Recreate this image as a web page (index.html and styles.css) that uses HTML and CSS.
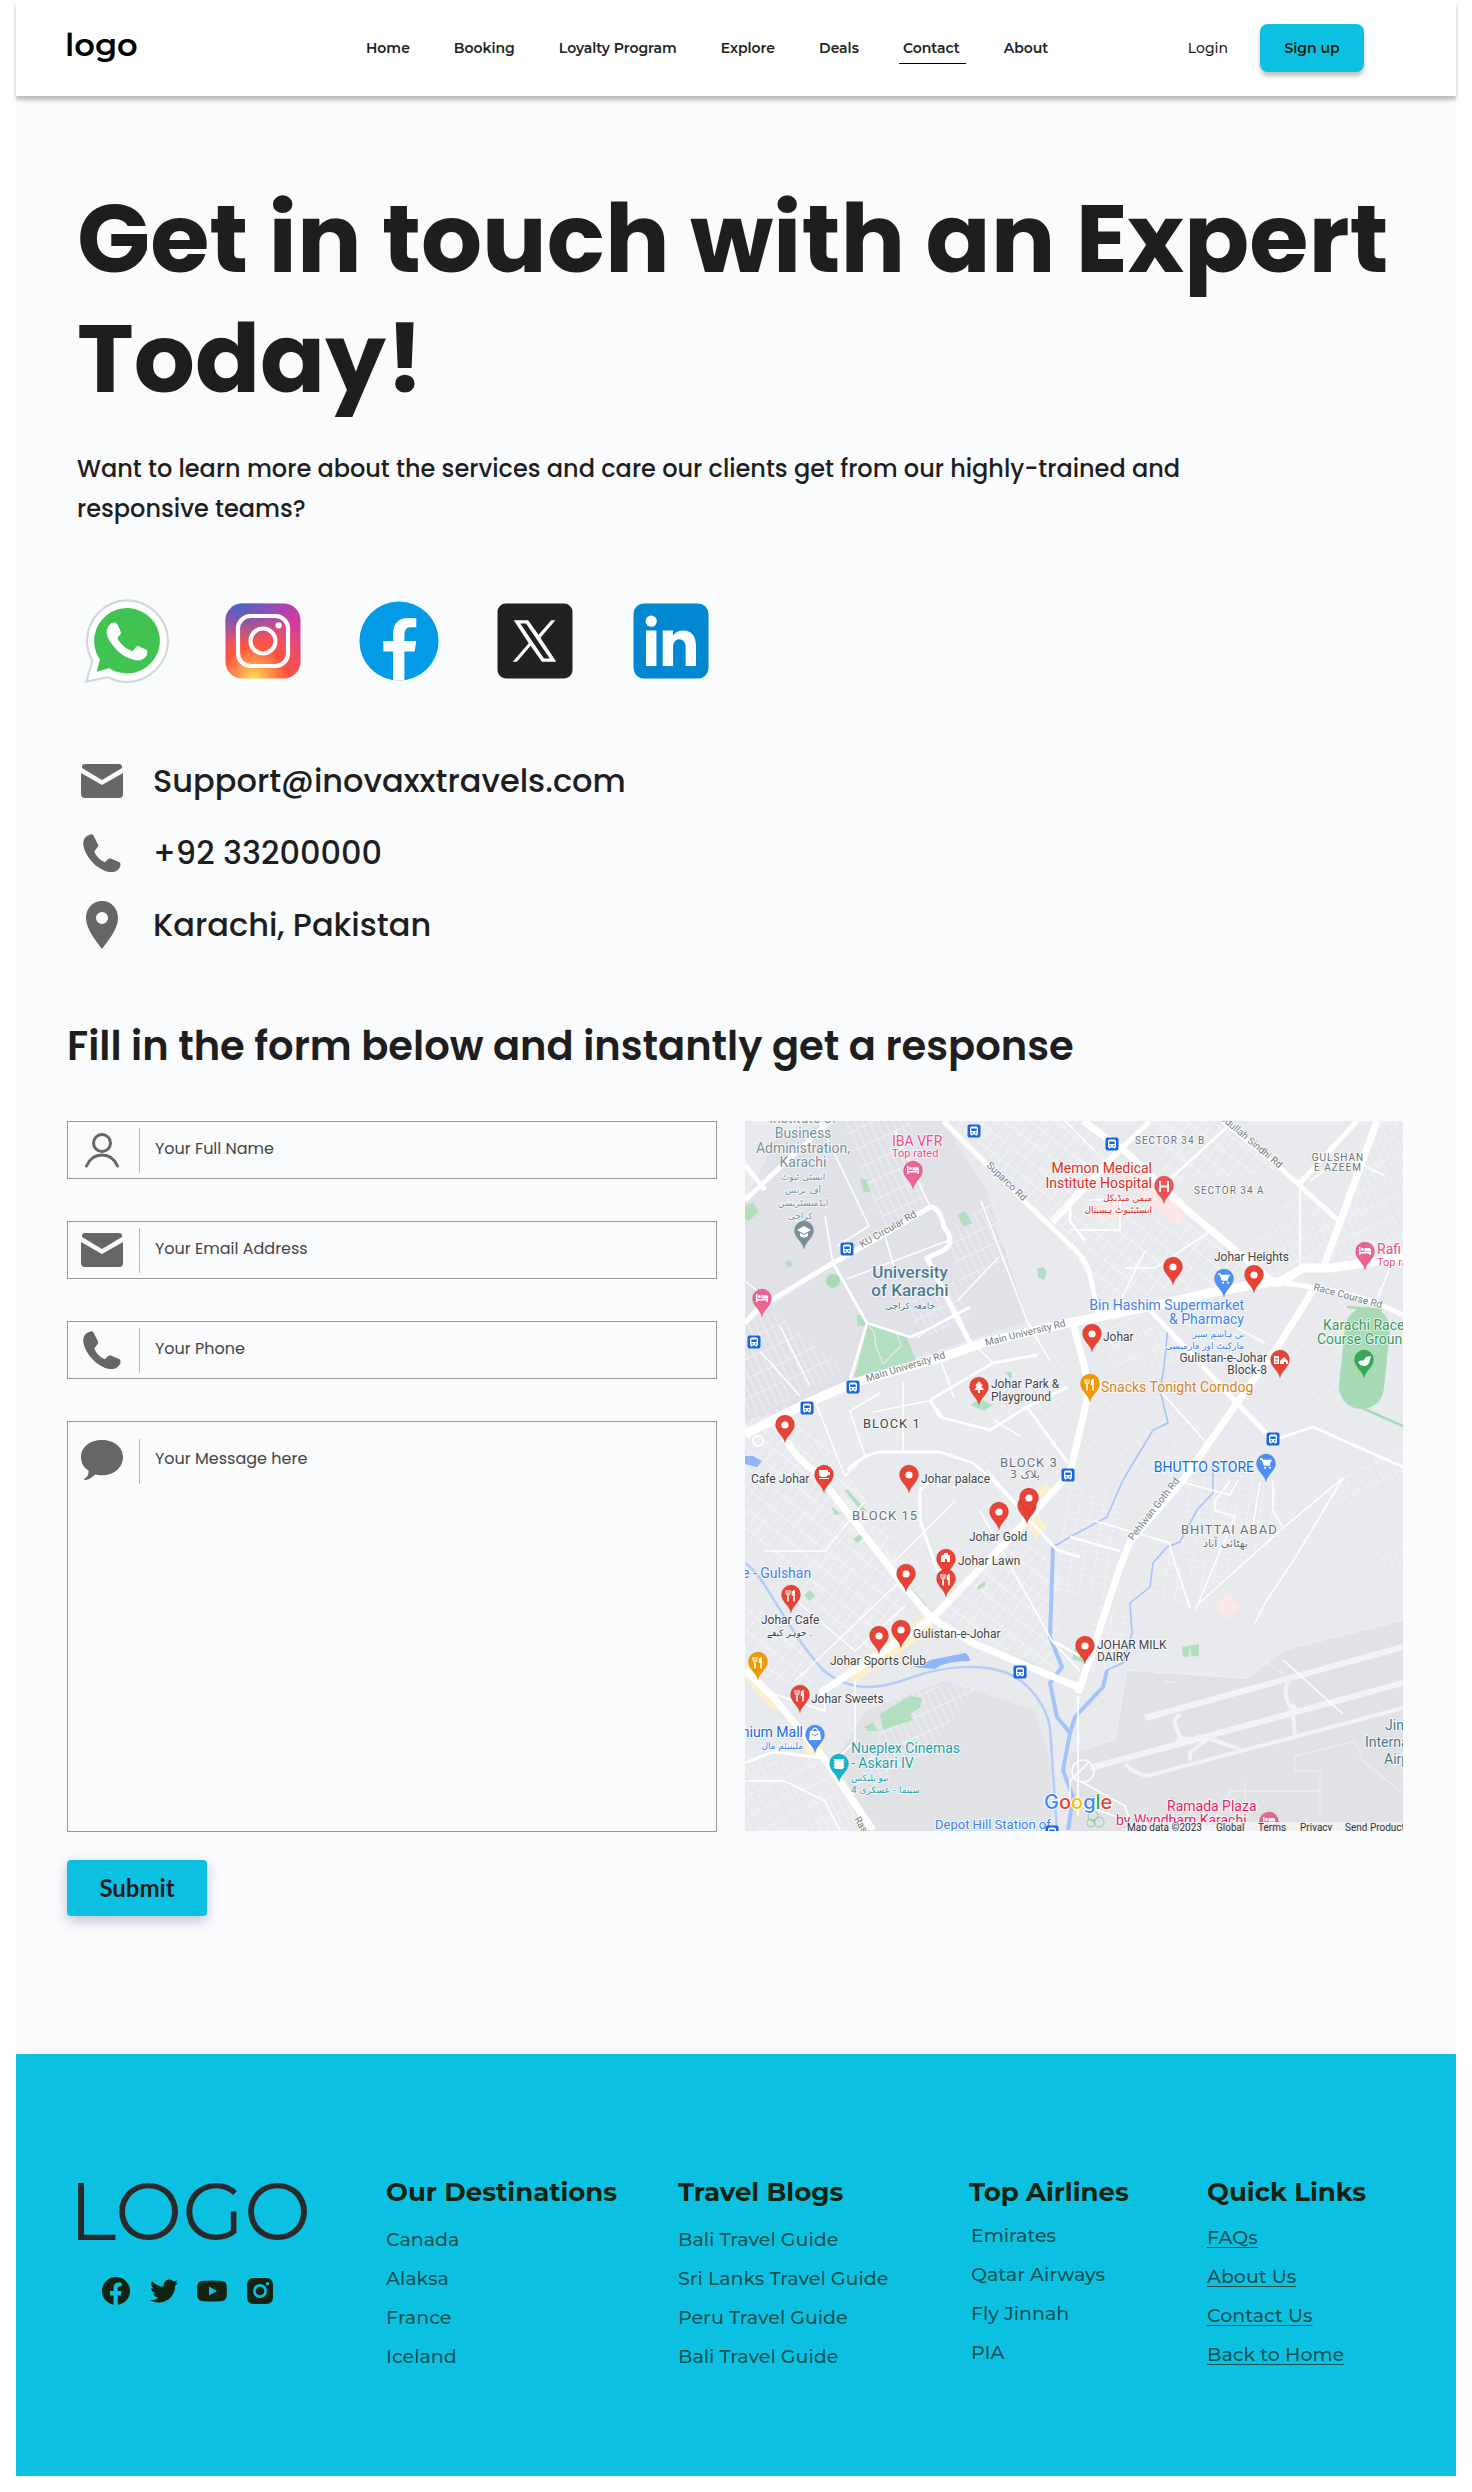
FILE: index.html
```html
<!DOCTYPE html>
<html lang="en">
<head>
<meta charset="utf-8">
<meta name="viewport" content="width=device-width, initial-scale=1">
<title>Contact</title>
<link rel="stylesheet" href="styles.css">
</head>
<body>
<svg class="sprite" aria-hidden="true">
  <symbol id="i-mail" viewBox="0 0 42 34"><path d="M4 0h34q3 0 3 3v1L21 16 1 4V3q0-3 3-3z"/><path d="M0 9l21 12L42 9v21q0 4-4 4H4q-4 0-4-4z"/></symbol>
  <symbol id="i-phone" viewBox="0 0 40 40"><path d="M7 1C3 2 0 6 1 12c2 12 16 27 29 27 5 0 8-3 9-7 0-1 0-2-1-3l-9-4c-1 0-2 0-3 1l-3 3c-5-2-9-6-11-11l3-4c1-1 1-2 1-3L11 1C10 0 9 0 7 1z"/></symbol>
</svg>
<div class="page">
  <header class="header">
    <a class="brand" href="#">logo</a>
    <nav class="nav">
      <a href="#">Home</a><a href="#">Booking</a><a href="#">Loyalty Program</a><a href="#">Explore</a><a href="#">Deals</a><a class="active" href="#">Contact</a><a href="#">About</a>
    </nav>
    <div class="actions"><a href="#">Login</a><button class="signup" type="button">Sign up</button></div>
  </header>

  <main class="main">
    <section class="hero">
      <h1>Get in touch with an Expert Today!</h1>
      <p class="lead">Want to learn more about the services and care our clients get from our highly-trained and responsive teams?</p>
      <div class="social">
        <a href="#" aria-label="WhatsApp"><svg viewBox="0 0 48 48"><path fill="#fff" stroke="#cfd8dc" d="M4.500 43.500l2.900-10A19.200 19.200 0 0 1 4.800 24C4.800 13.400 13.400 4.500 24 4.500S43.700 13.400 43.700 24 34.600 43.700 24 43.700c-3.200 0-6.300-.800-9.100-2.300z"/><path fill="#40c351" d="M35.200 12.800A15.800 15.800 0 0 0 10.600 32.300l.4.600-1.600 5.800 6-1.600.6.300A15.800 15.800 0 0 0 39.800 24c0-4.200-1.600-8.200-4.600-11.200z"/><path fill="#fff" fill-rule="evenodd" d="M19.300 16c-.4-.8-.7-.8-1.100-.8h-.9c-.3 0-.9.100-1.300.6s-1.700 1.600-1.700 4 1.700 4.700 2 5 3.300 5.300 8.200 7.200c4 1.600 4.900 1.300 5.700 1.200s2.800-1.100 3.200-2.300.4-2.100.3-2.300-.4-.3-.9-.6-2.800-1.400-3.200-1.500-.7-.2-1.100.2-1.200 1.500-1.500 1.900-.6.400-1 .100-2-.7-3.800-2.400c-1.400-1.300-2.400-2.800-2.600-3.300s0-.7.200-1 .5-.6.700-.8.300-.5.500-.8.100-.6 0-.8-1-2.600-1.700-3.600z"/></svg></a>
        <a href="#" aria-label="Instagram"><svg viewBox="0 0 48 48"><defs><radialGradient id="ig1" cx="19.400" cy="42" r="44.900" gradientUnits="userSpaceOnUse"><stop offset="0" stop-color="#fd5"/><stop offset=".15" stop-color="#ff9f4b"/><stop offset=".35" stop-color="#ff543f"/><stop offset=".5" stop-color="#ee4f62"/><stop offset=".75" stop-color="#d33aa4"/><stop offset="1" stop-color="#c837ab"/></radialGradient><radialGradient id="ig2" cx="11.800" cy="5.500" r="29.800" gradientTransform="matrix(1 0 0 .667 0 1.800)" gradientUnits="userSpaceOnUse"><stop offset="0" stop-color="#4168c9"/><stop offset="1" stop-color="#4168c9" stop-opacity="0"/></radialGradient></defs><rect x="6" y="6" width="36" height="36" rx="8" fill="url(#ig1)"/><rect x="6" y="6" width="36" height="36" rx="8" fill="url(#ig2)"/><g fill="none" stroke="#fff" stroke-width="2"><circle cx="24" cy="24" r="6"/><rect x="12" y="12" width="24" height="24" rx="6"/></g><circle cx="31.500" cy="16.500" r="1.500" fill="#fff"/></svg></a>
        <a href="#" aria-label="Facebook"><svg viewBox="0 0 48 48"><circle cx="24" cy="24" r="19" fill="#039be5"/><path fill="#fff" d="M26.600 29h4.900l.8-5h-5.700v-2.700c0-2.100.7-3.900 2.600-3.900h3.100V13.100c-.5-.1-1.700-.2-3.900-.2-4.600 0-7.200 2.400-7.200 7.900V24h-4.700v5h4.700v13.800c.9.100 1.900.2 2.800.2.900 0 1.700-.1 2.600-.2z"/></svg></a>
        <a href="#" aria-label="X"><svg viewBox="0 0 48 48"><rect x="6" y="6" width="36" height="36" rx="4" fill="#212121"/><path fill="#fff" fill-rule="evenodd" d="M13.800 14h6.900l5 7 6.100-7h2l-7.200 8.400L34.200 34h-6.900l-5.400-7.700L15.300 34h-2l7.700-8.900zm3.100 1.600 11.400 16.800h2.800L19.700 15.600z"/></svg></a>
        <a href="#" aria-label="LinkedIn"><svg viewBox="0 0 48 48"><rect x="6" y="6" width="36" height="36" rx="5" fill="#0288d1"/><circle cx="14.500" cy="14.500" r="2.700" fill="#fff"/><path fill="#fff" d="M12 19h5v17h-5zM36 36h-5v-9.100c0-2.200-1.200-3.700-3-3.700-1.400 0-2.300 1-2.700 1.900-.1.300-.3.900-.3 1.900v9h-5V19h5v2.600C25.700 20.500 27 19 29.900 19c3.600 0 6.100 2.300 6.100 7.400z"/></svg></a>
      </div>
      <address class="contacts">
        <p><svg width="42" height="34"><use href="#i-mail"/></svg><span>Support@inovaxxtravels.com</span></p>
        <p><svg width="42" height="39"><use href="#i-phone"/></svg><span>+92 33200000</span></p>
        <p><svg width="42" height="48" viewBox="-5 0 42 48"><path fill-rule="evenodd" d="M16 0C7 0 0 7 0 17c0 11 10 23 16 31 6-8 16-20 16-31C32 7 25 0 16 0zm0 11a6 6 0 1 1 0 12 6 6 0 0 1 0-12z"/></svg><span>Karachi, Pakistan</span></p>
      </address>
    </section>

    <h2>Fill in the form below and instantly get a response</h2>
    <div class="split">
      <form class="form">
        <label class="field"><svg class="outline" width="42" height="40" viewBox="0 0 42 40"><circle cx="21" cy="13" r="8.500"/><path d="M5.500 36c3-7 9-11 15.500-11s12.500 4 15.500 11"/></svg><input type="text" aria-label="Your Full Name" placeholder="Your Full Name"></label>
        <label class="field"><svg width="42" height="34"><use href="#i-mail"/></svg><input type="email" aria-label="Your Email Address" placeholder="Your Email Address"></label>
        <label class="field"><svg width="42" height="39"><use href="#i-phone"/></svg><input type="tel" aria-label="Your Phone" placeholder="Your Phone"></label>
        <label class="field message"><svg width="44" height="42" viewBox="0 0 44 42"><path d="M22 0c12 0 22 7 22 18S34 37 22 37c-3 0-5 0-7-1-3 3-7 6-11 6-1 0-1-1 0-2 3-1 4-4 4-8C3 29 0 24 0 18 0 7 10 0 22 0z"/></svg><textarea aria-label="Your Message here" placeholder="Your Message here"></textarea></label>
        <button class="submit" type="submit">Submit</button>
      </form>

      <svg class="map" viewBox="0 0 658 710" role="img" aria-label="Map of Karachi">
        <defs>
          <g id="pin"><path d="M0 0C-1-7-9.500-11-9.500-18.500a9.500 9.500 0 0 1 19 0C9.500-11 1-7 0 0z" stroke="#000" stroke-opacity=".2" stroke-width=".6"/></g>
          <g id="dot"><use href="#pin" fill="#ea4335"/><circle cy="-18" r="3.600" fill="#fff"/></g>
          <g id="fork" fill="none" stroke="#fff"><path stroke-width="1.600" d="M-3-17v5.500M3-23v11.500"/><path d="M-5-23v4q2 3 4 0v-4M-3-23v5"/><path stroke-width="2.500" d="M2-22v5"/></g>
          <g id="bed" fill="#fff"><path d="M-6-23h1.500v5H6v3H4.500v-1.500h-9V-15H-6z"/><circle cx="-2.600" cy="-20.500" r="1.400"/><path d="M-.5-22H4q2 0 2 2v1.500H-.5z"/></g>
          <g id="cart" fill="none" stroke="#fff" stroke-width="1.300"><path d="M-6-23h2l2.500 6h5.500"/><path fill="#fff" d="M-3-21.500h8l-2 3.500h-5z"/><path d="M-1-14.200h.1M4-14.200h.1" stroke-linecap="round" stroke-width="2"/></g>
          <g id="bus"><rect x="-6.500" y="-6.500" width="13" height="13" rx="2" fill="#1a66e0"/><path fill="#fff" d="M-4-2.500q0-2 2-2h4q2 0 2 2v5l-1 2H2l-1-1h-2l-1 1h-1l-1-2z"/><path fill="#1a66e0" d="M-2.700-2.500h5.400V0h-5.400zM-2.500 1.200h1.500v1.200h-1.500zM1 1.200h1.500v1.200H1z"/></g>
          <pattern id="h1" width="9" height="16" patternUnits="userSpaceOnUse" patternTransform="rotate(38)"><path d="M0 0V16M0 0H9" stroke="#f6f7f9" stroke-width="1.400"/></pattern>
          <pattern id="h2" width="7" height="18" patternUnits="userSpaceOnUse" patternTransform="rotate(-25)"><path d="M0 0V18M0 0H7" stroke="#f4f5f7" stroke-width="1.300"/></pattern>
          <pattern id="h3" width="12" height="6" patternUnits="userSpaceOnUse" patternTransform="rotate(8)"><path d="M0 0V6M0 0H12" stroke="#f5f6f8" stroke-width="1.200"/></pattern>
          <pattern id="h4" width="14" height="26" patternUnits="userSpaceOnUse" patternTransform="rotate(-38)"><path d="M0 0V26M0 0H14" stroke="#f3f4f6" stroke-width="1.200"/></pattern>
        </defs>
        <rect width="658" height="710" fill="#e8eaed"/>
        <path fill="#e0e2e7" d="M90 0H198L242 70 282 200 110 257 40 290 0 300V205L90 140 60 60zM30 20L85 0 120 30 92 140 0 200V80z"/>
        <path fill="#e0e2e6" d="M382 549L500 558 538 529 658 499V710H325V632L370 619z"/>
        <path fill="#e0e2e6" d="M200 560L290 590 305 640 308 710H130L90 640 120 590z"/>
        <!-- side streets -->
        <path fill="url(#h2)" d="M96 0h70l15 80-40 30zM200 110l50-30 15 55-50 30zM150 180l60-20 15 40-40 15z"/>
        <path fill="url(#h1)" d="M210 0H335L380 30 325 75 308 100zM410 0h70l60 50-120 12zM300 100l40-10 100 10 80 60-160 20z"/>
        <path fill="url(#h2)" d="M560 62l35 39-17 46-50 10-25-30zM636 0h22v130l-80 10zM355 190l40 0 60 50-90 10z"/>
        <path fill="url(#h4)" d="M425 200l90-30 15 60-38 45zM500 280l50-90 108 60v80l-90-30-40 13zM345 280l70-5 60 30-45 50-110 0z"/>
        <path fill="url(#h3)" d="M438 359l95-10 2 70-80 55-20-50zM325 360l55 10-20 110-55-10z"/>
        <path fill="url(#h4)" d="M190 280l60-35 70-30 3 140-75 0-50-25zM190 340l120 10-60 80-50 25zM90 360l80-20 20 110-50 0z"/>
        <path fill="url(#h1)" d="M0 300l40-15 60 60 80 130-60 60-120-120zM185 500l100-100 30 60v90zM0 470l60 60 10 40-70-20z"/>
        <path fill="url(#h2)" d="M0 200l30-10 70 60-60 30-40 15zM560 380l98-60v50l-70 20zM622 430l36-5v25h-30zM0 640l80 0 45 70H0zM150 575l90-20-60 80-70 30z"/>
        <path fill="url(#h3)" d="M348 480l40 20-15 50-30 0zM405 445l20-20 15 30 5 30-35-10z"/>
        <!-- hospital, markets -->
        <path fill="#fce8e6" d="M378 40l65 50-12 14-60-50zM340 82h35v14h-35zM469 486l13-14 14 14-14 13z"/>
        <path fill="#fdf0cf" d="M100 550l50-35 30-20 10 12-80 55zM0 540l45 52-20-5-25-30zM60 615h18v20h-18zM290 370l12-8 5 8-12 10zM280 400l12-8 10 15-12 10z"/>
        <!-- parks -->
        <g fill="#b3dfc0"><path d="M123 203l38 12 10 25-62 18zM0 84l8-2 6 8-10 10-4-3zM212 94l8-4 7 12-8 4zM112 194h9v11h-9zM40 141l5-2 3 5-5 3zM225 284l10-6 12 6-8 6zM260 251h7l-1 8zM115 58l6 0 5 14-8-2zM102 368l20 22-6 0-16-20zM86 385l10 8-6 1zM108 418l7-5 3 4-6 5zM59 474l6-5 5 6-6 5zM165 465l17 20-4 0-16-20zM262 533l28 10-2 5-26-12zM135 593l30-18 12 2-2 10-10 6 3 6-30 10zM120 606l8-5 4 9-10 0zM330 527l12-2 0 18-15-5zM232 466l8-6v5l-7 4zM437 526l17-3v12l-16 1z"/></g>
        <circle cx="88" cy="160" r="7" fill="#a8dab5"/><path fill="#b3dfc0" d="M292 148l6-2 4 5-3 8-6-3z"/>
        <g fill="none" stroke="#e8eaed" stroke-width="1.200"><path d="M124 205q8 8 6 18l8 20M138 243l18-18-5-15"/></g>
        <rect x="597" y="186" width="45" height="102" rx="22" fill="#a8dab5" transform="rotate(6 619 237)"/>
        <path fill="none" stroke="#a8dab5" stroke-width="2.500" d="M602 186l35 3M615 286l43 19"/>
        <g fill="none" stroke="#81c995" stroke-width=".8"><circle cx="348" cy="695" r="5"/><circle cx="354" cy="701" r="5"/><circle cx="346" cy="702" r="4"/></g>
        <!-- water -->
        <g fill="none" stroke="#a5c3fb" stroke-linejoin="round"><path stroke-width="1.600" d="M408 189l15 17-4 40-4 23 8 33-15 7-30 50-16 37-37 20-17 10M468 340v32l-16 17-17 32-13 5-14 16-3 24-20 16 2 30-9 30-16 7"/><path stroke-width="2.500" stroke="#b4ccf8" d="M0 442c20 12 40 65 78 107 30 25 60 18 90 7s70-14 94-4 40 35 43 55l7 103"/><path stroke-width="4" d="M362 549l-4 17-28 30-5 16-7 37 10 27-5 33M308 426l-3 90 12 30-12 16 7 34 13 16"/></g>
        <path fill="#8fb5fa" d="M168 546q10-2 17-7l35-7q5 3 5 8-25 0-35 8zM229 521l14 5v5l-14-6zM0 335l8 0 9 5-5 6-12-3z"/>
        <!-- airport -->
        <g fill="none" stroke="#f1f3f5" stroke-width="6"><path d="M400 597L658 526M345 647L658 562"/><path stroke-width="4" d="M380 643q10 10 22 12L658 587M436 594q-10 2-4 14 3 14 15 9M432 620q0-2 10 0M445 622q10-5 8-8M445 640v-8l20-16M465 618l30 10M547 555q-8 8-6 20t10 14l-4-6 3 30"/></g>
        <g fill="none" stroke="#eceef1" stroke-width="1.300"><path d="M325 632l45-13 12-70 120 8 36-28 120-30M402 540l30-32q20-10 45 2l63 44M410 540v12h60q20 0 35-10v-14M445 528v24M550 650v-15l60-15 8 20 40 32M550 650h25v20h-90l-22 40M485 670v20M575 670v30M500 660v50M420 560l10 2"/></g>
        <!-- minor roads -->
        <g fill="none" stroke="#fff" stroke-width="1.600" stroke-linejoin="round"><path d="M236 80L282 200 305 240M102 158l100-38M212 180l42-44M0 160l25 20M80 95l8 47M92 125l32-20-50-105M150 10l35 76M150 150L140 115M182 209l-10 8M35 205l30 60M70 280l30 75 20-20-15-45 30-18M15 230l40 45M128 291l60-12M158 331v-70M50 560l100-95 5-5M20 430h60l40-50M40 470l70 60 50-45M150 440l60-60M185 279l15 20M228 222l20 20M195 237l14 40M370 30L305 99M350 30l-30-30M345 79h30v30h-50M400 130l-30 60M380 147h30l60-40M555 62v80M565 60l35-25 40 20M492 207l28 15M415 270l45 50M430 359l55 15 8-15M350 400l75 22 0 5 20 60M485 360l-15 20v10l20 5-40 95M515 361l-8 50M528 359v30l10 18 60-50-48 80-30 45-10 20M538 407L450 486M538 539l60 54M250 300l25 15M312 429l-70-80M235 390l72 130 28 30M190 500l50 30M650 134l-20 50M0 660h40l40 20 20 40M20 570l60 20 0-12M110 560v60l-20 20M333 575v120M345 640l-20 20v20l60 20-5-15-45-25"/></g>
        <g fill="none" stroke="#fff" stroke-width="2.800" stroke-linejoin="round"><path d="M88 142l34 60-17 57M122 202l43 14 17-7 43-23M102 349q20-18 36-18h57l33 11 20 17 64 70 23 7M185 279l63-37 44-8M185 279l10 17 50 13 37-23 41-20M282 286l41 56M188 359l-13 10v30l17 50 8 10M482 6l-60 55M528 319l40-13 90 40M325 416l50 14M0 642l28-11 50 6M325 80v20l15 20M308 520l27 15"/></g>
        <!-- main roads -->
        <g fill="none" stroke="#fff" stroke-width="5" stroke-linejoin="round"><path d="M0 202l15-16 73-44 54-30 43-26q10 0 14 20 12 15 0 23l-17 8 43 85M198 0l77 76 50 48q15 12 20 30l8 38M405 0l-30 29-67 73M478 0l54 44 63 57M612 0l-57 62M535 161l30 5q50 6 93 28M405 189l87 93 36 37M0 79l85-79M0 44l20 25"/></g>
        <g fill="none" stroke="#fff" stroke-width="7" stroke-linejoin="round"><path d="M338 0l44 32 60 57 86 72M632 0l-37 101-17 46M570 166l-35 56-43 60-54 77-53 62-10 25-33 100-9 26M328 202l14 54v23l-17 73-43 47-80 83-17 17L75 572M40 317q10 20 32 35l80 104 33 40 43 26 107 45M0 549l28 27 50 60 50 73"/><path stroke-width="9" d="M0 313l62-31 46-20 87-25 43-15 85-20 85-17 57-13 60-11h10l23-14h27l27-4 46-7"/></g>
        <circle cx="13" cy="320" r="5" fill="none" stroke="#fff" stroke-width="2"/>
        <circle cx="338" cy="650" r="11" fill="none" stroke="#fff" stroke-width="1.500"/>
        <!-- labels -->
        <g class="map-labels">
          <g class="t14 mid" fill="#78909c"><text x="58" y="2">Institute of</text><text x="58" y="17">Business</text><text x="58" y="32">Administration,</text><text x="58" y="46">Karachi</text><g class="ur"><text x="58" y="59">انسٹی ٹیوٹ</text><text x="58" y="72">آف بزنس</text><text x="58" y="85">ایڈمنسٹریشن</text><text x="58" y="98">کراچی .</text></g></g>
          <g fill="#ec4f8a"><text class="t14" x="147" y="25">IBA VFR</text><text class="t11" x="147" y="36">Top rated</text><text class="t14" x="632" y="133">Rafi</text><text class="t11" x="632" y="145">Top rated</text></g>
          <g class="mid" fill="#4b7b91"><text class="t17" x="165" y="157">University</text><text class="t17" x="165" y="175">of Karachi</text><text class="ur" x="165" y="188">جامعہ کراچی</text></g>
          <g class="end" fill="#d93025"><text class="t14" x="407" y="52">Memon Medical</text><text class="t14" x="407" y="67">Institute Hospital</text><text class="ur" x="407" y="80">میمن میڈیکل</text><text class="ur" x="407" y="92">انسٹیٹیوٹ ہسپتال</text></g>
          <g class="area t10"><text x="390" y="23">SECTOR 34 B</text><text x="449" y="73">SECTOR 34 A</text><g class="mid"><text x="593" y="40">GULSHAN</text><text x="593" y="50">E AZEEM</text></g></g>
          <g class="area t13"><text x="118" y="307" fill="#444">BLOCK 1</text><text x="255" y="346">BLOCK 3</text><text x="107" y="399">BLOCK 15</text><text x="436" y="413">BHITTAI ABAD</text><text class="ur" x="265" y="357">3 بلاک</text><text class="ur" x="458" y="426">بھٹائی آباد</text></g>
          <g class="t12" fill="#444"><text x="469" y="140">Johar Heights</text><text x="358" y="220">Johar</text><text class="end" x="522" y="241">Gulistan-e-Johar</text><text class="end" x="522" y="253">Block-8</text><text x="246" y="267">Johar Park &amp;</text><text x="246" y="280">Playground</text><text x="6" y="362">Cafe Johar</text><text x="176" y="362">Johar palace</text><text x="224" y="420">Johar Gold</text><text x="213" y="444">Johar Lawn</text><text x="16" y="503">Johar Cafe</text><text class="ur" x="22" y="515">جوہر کیفے .</text><text x="168" y="517">Gulistan-e-Johar</text><text x="85" y="544">Johar Sports Club</text><text x="66" y="582">Johar Sweets</text><text x="352" y="528">JOHAR MILK</text><text x="352" y="540">DAIRY</text></g>
          <g fill="#3f83ee"><g class="end"><text class="t14" x="499" y="189">Bin Hashim Supermarket</text><text class="t14" x="499" y="203">&amp; Pharmacy</text><text class="ur" x="499" y="216">بن ہاشم سپر</text><text class="ur" x="499" y="228">مارکیٹ اور فارمیسی</text><text class="t14" x="509" y="351" fill="#1a6ae8">BHUTTO STORE</text><text class="t14" x="58" y="616" fill="#1a6ae8">Millennium Mall</text><text class="ur" x="58" y="628">ملینیئم مال</text></g><text class="t14" x="-3" y="457">e - Gulshan</text><text class="t13" x="190" y="708">Depot Hill Station of</text></g>
          <text class="t14" fill="#d98324" x="356" y="271">Snacks Tonight Corndog</text>
          <g class="t14" fill="#3c9a5f"><text x="578" y="209">Karachi Race</text><text x="572" y="223">Course Ground</text></g>
          <g class="t14" fill="#26a0a8"><text x="106" y="632">Nueplex Cinemas</text><text x="106" y="647">- Askari IV</text><text class="ur" x="106" y="660">نیو پلیکس</text><text class="ur" x="106" y="672">سینما - عسکری 4</text></g>
          <g class="t14" fill="#4b7b91"><text x="640" y="609">Jinnah</text><text x="620" y="626">International</text><text x="639" y="643">Airport</text></g>
          <g class="t14" fill="#e91e63"><text x="422" y="690">Ramada Plaza</text><text x="371" y="704">by Wyndham Karachi</text></g>
          <g class="t10 road"><text transform="translate(241 45) rotate(44)">Suparco Rd</text><text transform="translate(117 127) rotate(-30)">KU Circular Rd</text><text transform="translate(122 261) rotate(-17)">Main University Rd</text><text transform="translate(241 225) rotate(-14)">Main University Rd</text><text transform="translate(470 -6) rotate(40)">Abdullah Sindhi Rd</text><text transform="translate(568 169) rotate(15)">Race Course Rd</text><text transform="translate(388 420) rotate(-52)">Pehlwan Goth Rd</text><text transform="translate(109 698) rotate(60)">Rashid Minhas</text></g>
        </g>
        <!-- stations -->
        <use href="#bus" x="229" y="10"/><use href="#bus" x="102" y="128"/><use href="#bus" x="9" y="221"/><use href="#bus" x="108" y="266"/><use href="#bus" x="62" y="287"/><use href="#bus" x="367" y="23"/><use href="#bus" x="528" y="318"/><use href="#bus" x="323" y="354"/><use href="#bus" x="275" y="551"/><use href="#bus" x="307" y="711"/>
        <!-- places -->
        <g fill="#f06292"><use href="#pin" x="168" y="68"/><use href="#pin" x="17" y="196"/><use href="#pin" x="620" y="149"/><use href="#pin" x="524" y="719"/></g>
        <use href="#bed" x="168" y="68"/><use href="#bed" x="17" y="196"/><use href="#bed" x="620" y="149"/><use href="#bed" x="524" y="719"/>
        <use href="#pin" x="59" y="128" fill="#78909c"/><path fill="#fff" d="M52 109l7-4 7 4-7 4zM55 112l4 2 4-2v3q-4 3-8 0z"/>
        <g fill="#ea4335"><use href="#pin" x="234" y="284"/><use href="#pin" x="535" y="257"/><use href="#pin" x="79" y="372"/><use href="#pin" x="201" y="456"/><use href="#pin" x="201" y="476"/><use href="#pin" x="46" y="492"/><use href="#pin" x="55" y="592"/><use href="#pin" x="282" y="403"/></g>
        <use href="#pin" x="419" y="83" fill="#ef5350"/><path fill="none" stroke="#fff" stroke-width="2" d="M415 60v11M423 60v11M415 65.500h8"/>
        <path fill="#fff" d="M234 260l4 5h-2l3 4h-4v3h-2v-3h-4l3-4h-2zM529 235h5v8h-5zM535 240l4-4 4 4v3h-2v-2h-2v2h-4zM74 349h9v2h2v3h-2l-2 2h-5l-2-2zM74 357h10v1H74zM197 434h2v-2h4v2h2v7h-3v-3h-2v3h-4v-5z"/>
        <path fill="#ea4335" d="M530.500 237h2v1.500h-2zM530.500 240h2v1.500h-2z"/>
        <use href="#fork" x="201" y="476"/><use href="#fork" x="46" y="492"/><use href="#fork" x="55" y="592"/>
        <use href="#dot" x="40" y="322"/><use href="#dot" x="428" y="164"/><use href="#dot" x="509" y="172"/><use href="#dot" x="347" y="231"/><use href="#dot" x="164" y="372"/><use href="#dot" x="254" y="409"/><use href="#dot" x="284" y="395"/><use href="#dot" x="161" y="471"/><use href="#dot" x="134" y="533"/><use href="#dot" x="156" y="527"/><use href="#dot" x="340" y="543"/>
        <g fill="#4f8ff7"><use href="#pin" x="479" y="176"/><use href="#pin" x="521" y="361"/><use href="#pin" x="70" y="632"/></g><use href="#cart" x="479" y="176"/><use href="#cart" x="521" y="361"/><path fill="#fff" d="M65 610h10l1 9H64z"/><path fill="none" stroke="#fff" stroke-width="1.200" d="M67 610q3-6 6 0"/><path fill="none" stroke="#4f8ff7" d="M67 613q3 3 6 0"/>
        <g fill="#f29900"><use href="#pin" x="345" y="281"/><use href="#pin" x="13" y="559"/></g><use href="#fork" x="345" y="281"/><use href="#fork" x="13" y="559"/>
        <use href="#pin" x="619" y="257" fill="#34a853"/><path fill="#fff" d="M613 241q3-3 5-1l3-4 5-1-1 4q-1 6-6 6-4 0-6-4z"/>
        <use href="#pin" x="94" y="661" fill="#12b5cb"/><path fill="#fff" d="M90 638h8v10h-8z"/><path stroke="#fff" stroke-width="1.400" stroke-dasharray="1.500 1" d="M89.500 638v10M98.500 638v10"/>
        <!-- attribution -->
        <text class="glogo" x="299" y="688"><tspan fill="#4285f4">G</tspan><tspan fill="#ea4335">o</tspan><tspan fill="#fbbc04">o</tspan><tspan fill="#4285f4">g</tspan><tspan fill="#34a853">l</tspan><tspan fill="#ea4335">e</tspan></text>
        <rect x="380" y="701" width="278" height="9" fill="#f1f3f4" opacity=".85"/>
        <g class="legal"><text x="382" y="710">Map data ©2023</text><text x="471" y="710">Global</text><text x="513" y="710">Terms</text><text x="555" y="710">Privacy</text><text x="600" y="710">Send Product Feedback</text></g>
      </svg>
    </div>
  </main>

  <footer class="footer">
    <div class="foot-brand">
      <span class="foot-logo">LOGO</span>
      <div class="foot-social">
        <a href="#" aria-label="Facebook"><svg viewBox="0 0 32 32"><path fill-rule="evenodd" d="M30 16a14 14 0 1 0-16.500 13.800V20.500H10V16h3.500v-3c0-3.600 2-5.500 5.200-5.500 1.500 0 3.100.3 3.100.3v3.500H20c-1.700 0-2.300 1.100-2.300 2.200V16h3.900l-.6 4.500h-3.300v9.300A14 14 0 0 0 30 16z"/></svg></a>
        <a href="#" aria-label="Twitter"><svg viewBox="0 0 32 32"><path d="M30 7.500c-1 .5-2.200.8-3.300.9 1.200-.7 2-1.800 2.500-3.100-1.100.6-2.400 1.100-3.600 1.300a5.700 5.700 0 0 0-9.800 5.200C11 11.600 6.800 9.300 4 5.900a5.700 5.700 0 0 0 1.800 7.600c-1 0-1.800-.3-2.600-.7 0 2.800 2 5.200 4.600 5.700-.8.200-1.700.3-2.600.1.700 2.300 2.900 3.900 5.400 4A11.500 11.500 0 0 1 2 25a16 16 0 0 0 8.800 2.600c10.500 0 16.700-8.900 16.300-17 1.200-.8 2.200-1.900 2.900-3.100z"/></svg></a>
        <a href="#" aria-label="YouTube"><svg viewBox="0 0 32 32"><path fill-rule="evenodd" d="M6 6q10-1 20 0 4 .5 4.500 4 .8 6 0 12-.5 3.500-4.500 4-10 1-20 0-4-.5-4.500-4-.8-6 0-12Q2 6.500 6 6zm7 5.500v9l8-4.500z"/></svg></a>
        <a href="#" aria-label="Instagram"><svg viewBox="0 0 32 32"><path fill-rule="evenodd" d="M10 3h12q7 0 7 7v12q0 7-7 7H10q-7 0-7-7V10q0-7 7-7zm6 6a7 7 0 1 0 0 14 7 7 0 0 0 0-14zm7.500-2a1.700 1.700 0 1 0 0 3.400 1.700 1.700 0 0 0 0-3.400z"/><circle cx="16" cy="16" r="4.300"/></svg></a>
      </div>
    </div>
    <section><h3>Our Destinations</h3><ul><li>Canada</li><li>Alaksa</li><li>France</li><li>Iceland</li></ul></section>
    <section><h3>Travel Blogs</h3><ul><li>Bali Travel Guide</li><li>Sri Lanks Travel Guide</li><li>Peru Travel Guide</li><li>Bali Travel Guide</li></ul></section>
    <section class="airlines"><h3>Top Airlines</h3><ul><li>Emirates</li><li>Qatar Airways</li><li>Fly Jinnah</li><li>PIA</li></ul></section>
    <section class="quick"><h3>Quick Links</h3><ul><li><a href="#">FAQs</a></li><li><a href="#">About Us</a></li><li><a href="#">Contact Us</a></li><li><a href="#">Back to Home</a></li></ul></section>
  </footer>
</div>
</body>
</html>
```
FILE: styles.css
```css
* { box-sizing: border-box; }
body { margin: 0; background: #fff; color: #1e1e1e; font-family: Poppins, Inter, sans-serif; }
h1, h2, h3, p, ul { margin: 0; padding: 0; }
a { color: inherit; text-decoration: none; }
button { border: 0; font: inherit; color: inherit; cursor: pointer; }
.sprite { position: absolute; width: 0; height: 0; }
.page { padding: 0 16px 16px; }

.header { position: relative; display: flex; align-items: center; height: 96px; padding: 0 92px 0 49px; background: #fff; box-shadow: 0 4px 4px rgba(0, 0, 0, .25); font: 600 14px/20px Montserrat, Inter, sans-serif; }
.brand { flex: 0 0 301px; color: #000; font-size: 32px; line-height: 40px; padding-bottom: 6px; }
.nav { display: flex; gap: 44px; color: #222; white-space: nowrap; }
.active { position: relative; }
.active::after { content: ""; position: absolute; left: -4px; right: -6px; bottom: -6px; height: 1px; background: #000; }
.actions { display: flex; align-items: center; gap: 32px; margin-left: auto; font-weight: 500; }
.signup { width: 104px; height: 48px; padding: 0; border-radius: 8px; background: #0cc0e1; color: #12230f; font-weight: 600; box-shadow: 0 4px 4px rgba(0, 0, 0, .25); }

.main { padding: 83px 53px 138px 51px; background: #fafbfd; }
.hero { padding-left: 10px; }
h1 { font-size: 96px; line-height: 120px; font-weight: 700; }
.lead { max-width: 1140px; margin-top: 30px; font-size: 24px; line-height: 40px; font-weight: 500; }
.social { display: flex; gap: 36px; margin-top: 62px; }
.social a, .social svg { display: block; width: 100px; height: 100px; }
.contacts { margin-top: 54px; padding-left: 4px; font-style: normal; font-size: 32px; line-height: 48px; font-weight: 500; }
.contacts p { display: flex; align-items: center; gap: 30px; height: 72px; }
.contacts svg, .field svg { flex: none; fill: #666; }
h2 { margin-top: 55px; font-size: 40px; line-height: 60px; font-weight: 600; }

.split { display: grid; grid-template-columns: 650fr 658fr; gap: 28px; align-items: start; margin-top: 45px; }
.form { display: flex; flex-direction: column; gap: 42px; }
.field { display: flex; align-items: center; height: 58px; padding-left: 13px; border: 1px solid #97999d; }
.field svg { width: 42px; }
.field .outline { fill: none; stroke: #666; stroke-width: 3px; stroke-linecap: round; }
.field input, .field textarea { flex: 1; min-width: 0; height: 45px; margin-left: 16px; padding: 0 15px 3px; border: 0; border-left: 1px solid #b9bbbe; outline: 0; background: none; color: #444; font: 400 16px/24px Poppins, Inter, sans-serif; }
.field ::placeholder { color: #444; opacity: 1; }
.message { align-items: flex-start; height: 411px; padding-top: 17px; }
.field textarea { padding: 8px 15px; resize: none; overflow: hidden; }
.submit { width: 140px; height: 56px; margin-top: -14px; padding: 0; border-radius: 4px; background: #0cc0e1; box-shadow: 0 6px 12px rgba(60, 60, 130, .22), 0 2px 16px rgba(0, 0, 0, .06); font: 700 24px/32px Lato, sans-serif; }

.map { display: block; width: 100%; height: auto; font-family: Roboto, sans-serif; }
.map-labels text { paint-order: stroke; stroke: #fff; stroke-opacity: .7; stroke-width: 2px; stroke-linejoin: round; }
.t10 { font-size: 10px; }
.t11 { font-size: 11px; }
.t12 { font-size: 12px; }
.t13 { font-size: 13px; }
.t14 { font-size: 14px; }
.t17 { font-size: 17px; font-weight: 500; }
.mid { text-anchor: middle; }
.end { text-anchor: end; }
.ur { font: 9px "DejaVu Sans", sans-serif; }
.area .ur { font-size: 11px; }
.area { fill: #6d7278; letter-spacing: 1px; }
.road { fill: #777b80; }
.glogo { font: 500 20px Inter, sans-serif; paint-order: stroke; stroke: #fff; stroke-width: 2px; }
.legal { font-size: 10px; fill: #333; }

.footer { display: grid; grid-template-columns: 317px 292px 291px 238px 1fr; height: 422px; padding: 118px 20px 0 53px; background: #0cc0e1; color: #12230f; font: 500 19px/39px Montserrat, Inter, sans-serif; }
.foot-logo { display: block; color: #292929; font: 400 80px/80px Montserrat, Lato, sans-serif; }
.foot-social { display: flex; gap: 16px; margin-top: 23px; padding-left: 31px; }
.foot-social svg { display: block; width: 32px; height: 32px; fill: #12230f; }
.footer h3 { font-size: 26px; line-height: 40px; font-weight: 700; white-space: nowrap; }
.footer ul { margin-top: 8px; list-style: none; color: rgba(18, 35, 15, .7); white-space: nowrap; }
.footer .airlines ul { margin-top: 4px; padding-left: 2px; }
.footer .quick ul { margin-top: 6px; }
.quick a { text-decoration: underline; text-underline-offset: 3px; }
```
